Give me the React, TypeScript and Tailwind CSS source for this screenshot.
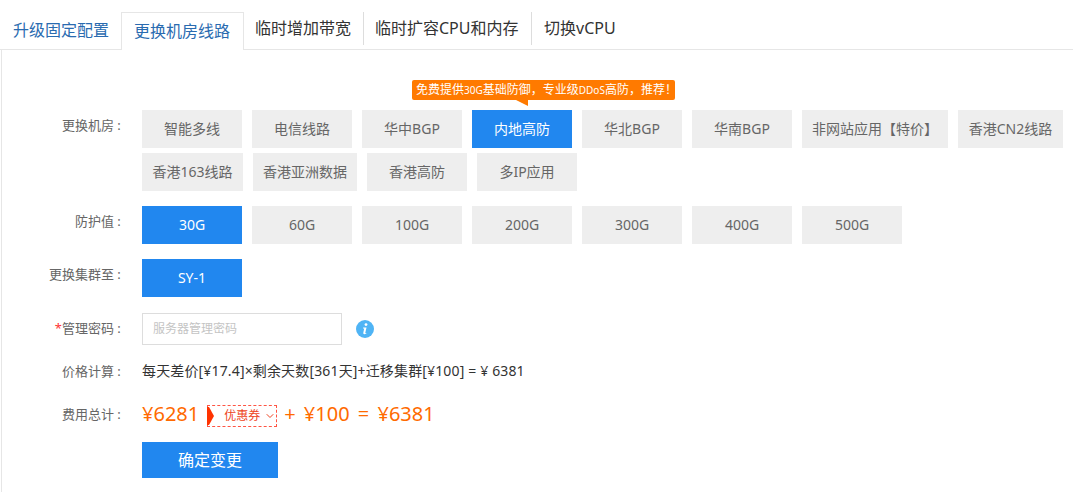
import { ChevronDown } from "lucide-react";

const FONT = "font-['Noto_Sans','Noto_Sans_CJK_SC',sans-serif]";

const ROOMS = ["智能多线", "电信线路", "华中BGP", "内地高防", "华北BGP", "华南BGP", "非网站应用【特价】", "香港CN2线路", "香港163线路", "香港亚洲数据", "香港高防", "多IP应用"];
const SHIELDS = ["30G", "60G", "100G", "200G", "300G", "400G", "500G"];

function Option({ label, active, tip }: { label: string; active?: boolean; tip?: boolean }) {
  return (
    <div
      className={`relative h-[38px] px-2.5 text-center text-sm leading-[37px] ${
        label === "香港163线路" ? "min-w-[101px]" : label === "香港CN2线路" ? "min-w-[105px]" : "min-w-[100px]"
      } ${active ? "bg-[#2187ef] text-white" : "bg-[#eeeeee] text-[#666666]"}`}
    >
      {label}
      {tip && (
        <div className="absolute left-[-60px] top-[-30px] h-5 w-[263px] rounded-[2px] bg-[#ff7a00] pl-1 text-left text-xs leading-5 whitespace-nowrap text-white">
          免费提供<span className="text-[10px]">30G</span>基础防御，专业级<span className="text-[10px]">DDoS</span>高防，推荐！
          <span className="absolute left-[104px] top-5 border-t-[6px] border-l-[12px] border-t-[#ff7a00] border-l-transparent" />
        </div>
      )}
    </div>
  );
}

function Row({ label, star, className, children }: { label: string; star?: boolean; className?: string; children: React.ReactNode }) {
  return (
    <div className={`flex ${className ?? ""}`}>
      <div className="w-[122px] shrink-0 text-right text-[13px] leading-[30px] text-[#666666]">
        {star && <span className="text-[#ff3333]">*</span>}
        {label}
        <span className="inline-block w-[10px] text-center">:</span>
      </div>
      <div className="ml-[18px] min-w-0 flex-1">{children}</div>
    </div>
  );
}

export default function App() {
  return (
    <div className={`h-[492px] w-[1073px] overflow-hidden bg-white ${FONT}`}>
      <div className="flex h-[50px] items-end border-b border-[#e6e6e6] pl-px">
        <div className="h-[37px] w-[120px] pl-3 text-base leading-[37px] text-[#2a6bb0]">升级固定配置</div>
        <div className="relative top-px h-[38px] w-[123px] border-x border-t border-[#e6e6e6] bg-white pl-3 text-base leading-[37px] text-[#2a6bb0]">
          更换机房线路
        </div>
        <div className="mb-[4px] h-[33px] w-[120px] border-r border-[#dddddd] pl-[11px] text-base leading-[33px] text-[#333333]">临时增加带宽</div>
        <div className="mb-[4px] h-[33px] w-[168px] border-r border-[#dddddd] pl-[11px] text-base leading-[33px] text-[#333333]">临时扩容CPU和内存</div>
        <div className="mb-[4px] h-[33px] pl-3 text-base leading-[33px] text-[#333333]">切换vCPU</div>
      </div>

      <div className="ml-px h-[442px] border-l border-[#e6e6e6] pt-[60px]">
        <Row label="更换机房" className="mb-[15px]">
          <div className="flex flex-wrap gap-x-2.5 gap-y-[5px]">
            {ROOMS.map((r, i) => (
              <Option key={r} label={r} active={i === 3} tip={i === 3} />
            ))}
          </div>
        </Row>
        <Row label="防护值" className="mb-[15px]">
          <div className="flex gap-2.5">
            {SHIELDS.map((s, i) => (
              <Option key={s} label={s} active={i === 0} />
            ))}
          </div>
        </Row>
        <Row label="更换集群至" className="mb-4">
          <div className="flex">
            <Option label="SY-1" active />
          </div>
        </Row>
        <Row label="管理密码" star className="mb-[11px]">
          <div className="flex items-center">
            <div className="h-8 w-[200px] border border-[#dddddd] pl-2.5 text-xs leading-[30px] text-[#c4c4c4]">服务器管理密码</div>
            <svg className="ml-[14px]" width="18" height="18" viewBox="0 0 18 18">
              <circle cx="9" cy="9" r="9" fill="#4fb4f5" />
              <circle cx="10" cy="4.6" r="1.4" fill="#fff" />
              <path d="M7.2 7.6h3.3l-1.2 5.2c-.1.4.3.5 1.1.1l-.2.9c-1.6.8-3.3.6-2.9-1l.9-4.2H7z" fill="#fff" />
            </svg>
          </div>
        </Row>
        <Row label="价格计算" className="mb-[13px]">
          <div className="text-sm leading-[30px] tracking-[0.15px] whitespace-nowrap text-[#333333]">每天差价[¥17.4]×剩余天数[361天]+迁移集群[¥100] = ¥ 6381</div>
        </Row>
        <Row label="费用总计" className="mb-[13px]">
          <div className="flex h-[30px] items-center text-xl text-[#ff6a00]">
            <span>¥6281</span>
            <div className="relative ml-2 mt-1 flex h-[22px] w-[70px] items-center border border-dashed border-[#ff5544] pl-4 text-xs text-[#ee4422]">
              <svg className="absolute left-[-1px] top-0" width="7" height="20" viewBox="0 0 7 20">
                <path d="M0 1h2l5 9-5 9H0z" fill="#ff3300" />
              </svg>
              优惠券
              <ChevronDown className="ml-1 text-[#ee4422]" size={12} strokeWidth={2} />
            </div>
            <span className="ml-[7px] whitespace-pre [word-spacing:3px]">+ ¥100 = ¥6381</span>
          </div>
        </Row>
        <div className="ml-[140px] h-9 w-[136px] bg-[#2187ef] text-center text-base leading-9 text-white">确定变更</div>
      </div>
    </div>
  );
}
